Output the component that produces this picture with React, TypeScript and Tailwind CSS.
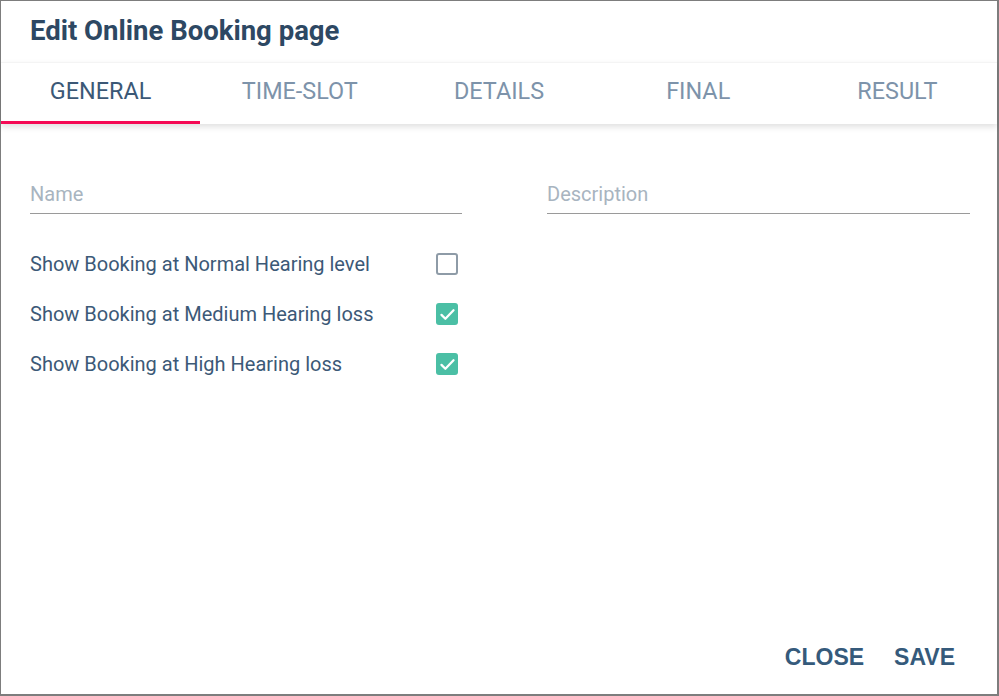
import { useState } from 'react';

const TABS = ['GENERAL', 'TIME-SLOT', 'DETAILS', 'FINAL', 'RESULT'];

const OPTIONS = [
  { label: 'Show Booking at Normal Hearing level', checked: false },
  { label: 'Show Booking at Medium Hearing loss', checked: true },
  { label: 'Show Booking at High Hearing loss', checked: true },
];

function Check({ on, onClick }: { on: boolean; onClick: () => void }) {
  if (on) {
    return (
      <button
        onClick={onClick}
        className="w-[22px] h-[22px] rounded-[3px] bg-[#4bbfa5] flex items-center justify-center"
      >
        <svg width="17" height="17" viewBox="0 0 24 24" fill="none">
          <path d="M3.5 12.5l5.5 5.5L20.5 6" stroke="#fff" strokeWidth="3.2" strokeLinecap="round" strokeLinejoin="round" />
        </svg>
      </button>
    );
  }
  return (
    <button
      onClick={onClick}
      className="w-[22px] h-[22px] rounded-[3px] border-2 border-[#8e9ba7] bg-white"
    />
  );
}

export default function App() {
  const [tab, setTab] = useState(0);
  const [opts, setOpts] = useState(OPTIONS.map((o) => o.checked));

  return (
    <div
      className="w-[999px] h-[696px] bg-white border-l border-t border-r-2 border-b-2 border-[#7d7d7d] flex flex-col"
      style={{ fontFamily: 'Roboto, "Noto Sans", sans-serif' }}
    >
      <div className="h-[61px] flex items-center pl-[29px]">
        <h1 className="text-[27.5px] font-bold text-[#2d4863] leading-none pb-[1px]">
          Edit Online Booking page
        </h1>
      </div>

      {/* tabs */}
      <div className="relative z-10 h-[62px] flex border-t border-[#f4f4f4] shadow-[0_3px_6px_rgba(0,0,0,0.12)]">
        {TABS.map((t, i) => (
          <button
            key={t}
            onClick={() => setTab(i)}
            className={
              'relative flex-1 flex items-center justify-center text-[23.4px] leading-none pb-[3px] ' +
              (tab === i ? 'text-[#3b5876]' : 'text-[#7d93aa]')
            }
          >
            {t}
            {tab === i && <span className="absolute left-0 right-0 bottom-0 h-[3px] bg-[#f50a55]" />}
          </button>
        ))}
      </div>

      <div className="flex-1 flex flex-col pl-[29px] pr-[27px]">
        <div className="flex justify-between mt-[55px]">
          <div className="w-[432px] border-b border-[#9a9a9a] pb-[4px]">
            <span className="text-[20px] text-[#a8b4c0]">Name</span>
          </div>
          <div className="w-[423px] border-b border-[#9a9a9a] pb-[4px]">
            <span className="text-[20px] text-[#a8b4c0]">Description</span>
          </div>
        </div>

        <div className="w-[432px] flex flex-col mt-[25px]">
          {OPTIONS.map((o, i) => (
            <div key={o.label} className="h-[50px] flex items-center justify-between pr-[4px]">
              <span className="text-[20px] text-[#3c5977]">{o.label}</span>
              <Check
                on={opts[i]}
                onClick={() => setOpts((p) => p.map((v, j) => (j === i ? !v : v)))}
              />
            </div>
          ))}
        </div>

        <div className="mt-auto mb-[25px] flex justify-end gap-[30px] pr-[15px]">
          {['CLOSE', 'SAVE'].map((b) => (
            <button
              key={b}
              className="text-[23px] font-bold text-[#355a7b] leading-none"
              style={{ fontFamily: '"Liberation Sans", Arial, sans-serif' }}
            >
              {b}
            </button>
          ))}
        </div>
      </div>
    </div>
  );
}
